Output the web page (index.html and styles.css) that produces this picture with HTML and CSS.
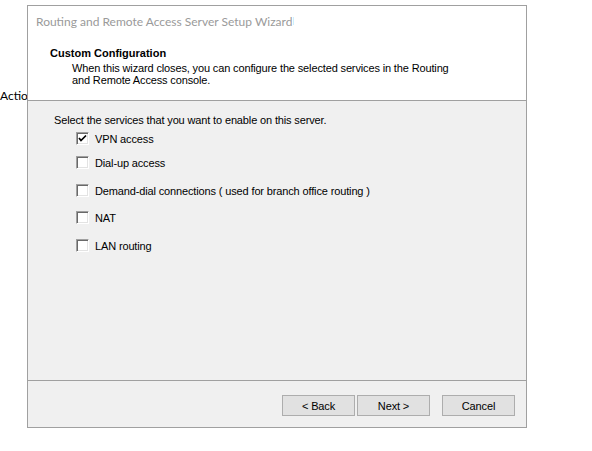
FILE: index.html
```html
<!DOCTYPE html>
<html>
<head>
<meta charset="utf-8">
<link rel="stylesheet" href="styles.css">
</head>
<body>
<div class="desktop-label">Action</div>
<div class="dialog">
  <div class="header">
    <div class="title">Routing and Remote Access Server Setup Wizard<span class="caret"></span></div>
    <div class="heading">Custom Configuration</div>
    <div class="desc">When this wizard closes, you can configure the selected services in the Routing<br>and Remote Access console.</div>
  </div>
  <div class="body">
    <div class="prompt">Select the services that you want to enable on this server.</div>
    <div class="options">
      <label class="opt"><span class="box"><svg width="9" height="9" viewBox="0 0 9 9"><path d="M1 4 L3 6.5 L8 1.5" fill="none" stroke="#000" stroke-width="1.7"/></svg></span>VPN access</label>
      <label class="opt"><span class="box"></span>Dial-up access</label>
      <label class="opt"><span class="box"></span>Demand-dial connections ( used for branch office routing )</label>
      <label class="opt"><span class="box"></span>NAT</label>
      <label class="opt"><span class="box"></span>LAN routing</label>
    </div>
  </div>
  <div class="footer">
    <button class="btn">&lt; Back</button>
    <button class="btn">Next &gt;</button>
    <button class="btn cancel">Cancel</button>
  </div>
</div>
</body>
</html>
```
FILE: styles.css
```css
html, body {
  margin: 0;
  padding: 0;
  background: #ffffff;
  width: 592px;
  height: 451px;
  overflow: hidden;
  font-family: "Liberation Sans", Arial, sans-serif;
  font-size: 11px;
  letter-spacing: -0.14px;
  color: #000;
}
.desktop-label {
  position: absolute;
  left: 0;
  top: 88px;
  font-family: "Lato", "Noto Sans", sans-serif;
  font-size: 12px;
  letter-spacing: 0;
  color: #000;
}
.dialog {
  position: absolute;
  left: 27px;
  top: 5px;
  width: 498px;
  height: 421px;
  border: 1px solid #a0a0a0;
  background: #f0f0f0;
  display: flex;
  flex-direction: column;
}
.header {
  background: #ffffff;
  height: 94px;
  border-bottom: 1px solid #a0a0a0;
}
.title {
  font-family: "Lato", "Noto Sans", sans-serif;
  font-size: 12px;
  letter-spacing: 0;
  color: #9a9a9a;
  padding: 5px 0 0 8px;
  height: 25px;
  box-sizing: border-box;
  display: flex;
  align-items: center;
}
.caret {
  display: inline-block;
  width: 1px;
  height: 8px;
  background: #cdeffd;
  margin-left: 1px;
}
.heading {
  font-weight: bold;
  padding: 16px 0 0 22px;
  line-height: 13px;
  letter-spacing: 0;
}
.desc {
  padding: 2px 0 0 44px;
  line-height: 12px;
}
.body {
  flex: 1;
  border-bottom: 1px solid #a0a0a0;
  padding: 13px 0 0 26px;
}
.prompt {
  line-height: 13px;
}
.options {
  display: flex;
  flex-direction: column;
  padding-left: 22px;
  margin-top: 5px;
}
.opt {
  display: flex;
  align-items: center;
  height: 13px;
  margin-bottom: 15px;
}
.opt:first-child {
  margin-bottom: 11px;
}
.opt:nth-child(3) {
  margin-bottom: 14px;
}
.box {
  width: 11px;
  height: 11px;
  border: 1px solid;
  border-color: #a0a0a0 #ffffff #ffffff #a0a0a0;
  box-shadow: inset 1px 1px 0 #696969, inset -1px -1px 0 #e3e3e3;
  background: #fff;
  margin-right: 6px;
  display: flex;
  align-items: center;
  justify-content: center;
}
.footer {
  height: 46px;
  display: flex;
  align-items: flex-start;
  padding: 14px 0 0 254px;
  box-sizing: border-box;
}
.btn {
  width: 73px;
  height: 21px;
  margin: 0;
  padding: 0;
  background: #e1e1e1;
  border: 1px solid #adadad;
  font-family: "Liberation Sans", Arial, sans-serif;
  font-size: 11px;
  letter-spacing: -0.14px;
  color: #000;
  margin-right: 2px;
}
.btn.cancel {
  margin-left: 10px;
}
```
